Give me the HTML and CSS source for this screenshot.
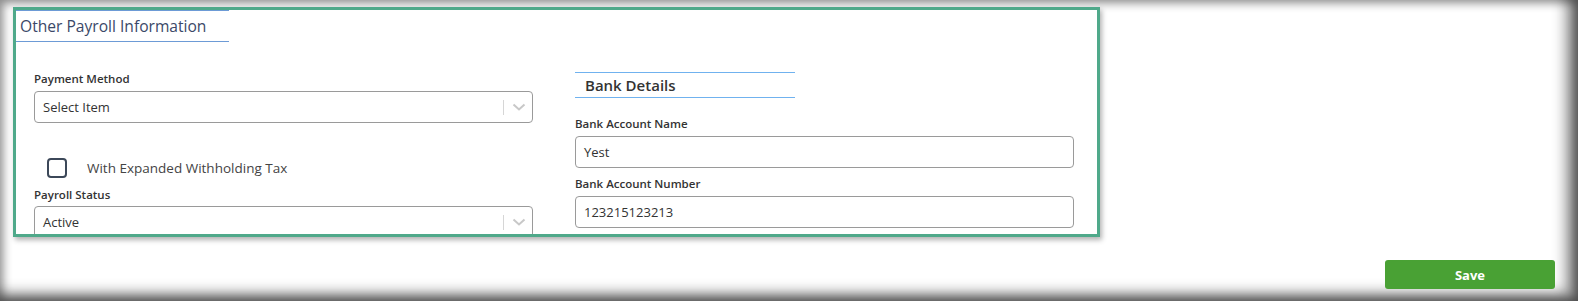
FILE: index.html
```html
<!DOCTYPE html>
<html>
<head>
<meta charset="utf-8">
<link rel="stylesheet" href="styles.css">
</head>
<body>
<div class="page">
  <section class="panel">
    <h2 class="panel-title">Other Payroll Information</h2>
    <div class="cols">
      <div class="col col-left">
        <label class="field-label">Payment Method</label>
        <div class="select">
          <span class="select-value">Select Item</span>
          <span class="select-ind">
            <i class="select-sep"></i>
            <svg class="chev" width="14" height="8" viewBox="0 0 14 8"><path d="M1.5 1.5 L7 6.5 L12.5 1.5" fill="none" stroke="#c8c8c8" stroke-width="2"/></svg>
          </span>
        </div>
        <div class="check-row">
          <span class="checkbox"></span>
          <span class="check-label">With Expanded Withholding Tax</span>
        </div>
        <label class="field-label status-label">Payroll Status</label>
        <div class="select">
          <span class="select-value">Active</span>
          <span class="select-ind">
            <i class="select-sep"></i>
            <svg class="chev" width="14" height="8" viewBox="0 0 14 8"><path d="M1.5 1.5 L7 6.5 L12.5 1.5" fill="none" stroke="#c8c8c8" stroke-width="2"/></svg>
          </span>
        </div>
      </div>
      <div class="col col-right">
        <h3 class="sub-title">Bank Details</h3>
        <label class="field-label bank-label">Bank Account Name</label>
        <div class="input">Yest</div>
        <label class="field-label bank-label2">Bank Account Number</label>
        <div class="input">123215123213</div>
      </div>
    </div>
  </section>
  <div class="actions">
    <button class="btn-save">Save</button>
  </div>
</div>
</body>
</html>
```

FILE: styles.css
```css
* { box-sizing: border-box; }
html, body { margin: 0; padding: 0; background: #fff; }
body { font-family: "Open Sans", "Noto Sans", sans-serif; color: #333; }

.page {
  height: 301px;
  padding: 7px 0 0 13px;
  background: #fff;
  box-shadow: inset 0 0 10px 3px rgba(0,0,0,0.45), inset -14px -10px 14px -2px rgba(0,0,0,0.45);
  overflow: hidden;
}

.panel {
  width: 1087px;
  height: 230px;
  border: 3px solid #4fa98a;
  background: #fff;
  box-shadow: 2px 3px 5px rgba(0,0,0,0.3);
  overflow: hidden;
}

.panel-title {
  margin: 0 0 0 -7px;
  width: 220px;
  height: 32px;
  padding: 0 0 0 11px;
  border-top: 1px solid #6d9bd6;
  border-bottom: 1px solid #6d9bd6;
  font-size: 15.6px;
  font-weight: 400;
  line-height: 30px;
  color: #3b4868;
}

.cols {
  display: grid;
  grid-template-columns: 499px 499px;
  column-gap: 42px;
  padding-left: 18px;
}

.field-label {
  display: block;
  font-size: 11.5px;
  font-weight: 600;
  line-height: 17px;
  color: #333;
}
.col-left > .field-label:first-child { margin-top: 28px; }

.select, .input {
  margin-top: 4px;
  height: 32px;
  border: 1px solid #9a9a9a;
  border-radius: 4px;
  display: flex;
  align-items: center;
  padding-left: 8px;
  font-size: 13px;
  color: #333;
  background: #fff;
}
.select-value { flex: 1; }
.select-ind { display: flex; align-items: center; height: 100%; }
.select-sep { display: block; width: 1px; height: 15px; background: #d6d6d6; }
.chev { margin: 0 6px 0 8px; }

.check-row {
  margin-top: 35px;
  display: flex;
  align-items: center;
  height: 20px;
  padding-left: 13px;
}
.checkbox {
  width: 20px;
  height: 20px;
  border: 2px solid #3c4859;
  border-radius: 4px;
}
.check-label {
  margin-left: 20px;
  font-size: 13.5px;
  color: #444;
}
.status-label { margin-top: 8px; }
.col-left .select:last-child { margin-top: 3px; }

.sub-title {
  margin: 30px 0 0 0;
  width: 220px;
  height: 26px;
  padding-left: 10px;
  border-top: 1px solid #70b2ef;
  border-bottom: 1px solid #70b2ef;
  font-size: 15px;
  font-weight: 600;
  line-height: 24px;
  color: #333;
}
.bank-label { margin-top: 17px; }
.bank-label2 { margin-top: 7px; }

.actions {
  display: flex;
  justify-content: flex-end;
  margin-top: 23px;
  padding-right: 23px;
}
.btn-save {
  width: 170px;
  height: 29px;
  border: 0;
  border-radius: 3px;
  background: #49a134;
  color: #fff;
  font-family: "Open Sans", sans-serif;
  font-size: 13px;
  font-weight: 700;
}
```
